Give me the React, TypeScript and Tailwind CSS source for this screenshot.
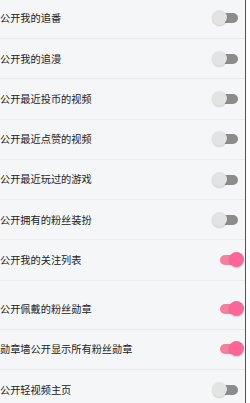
import { useState } from "react";

type Item = { label: string; on: boolean };

const groupA: Item[] = [
  { label: "公开我的追番", on: false },
  { label: "公开我的追漫", on: false },
  { label: "公开最近投币的视频", on: false },
  { label: "公开最近点赞的视频", on: false },
  { label: "公开最近玩过的游戏", on: false },
  { label: "公开拥有的粉丝装扮", on: false },
  { label: "公开我的关注列表", on: true },
];

const groupB: Item[] = [
  { label: "公开佩戴的粉丝勋章", on: true },
  { label: "勋章墙公开显示所有粉丝勋章", on: true },
  { label: "公开轻视频主页", on: false },
];

function Toggle({ on, onClick }: { on: boolean; onClick: () => void }) {
  return (
    <button onClick={onClick} className="relative w-[32px] h-[16px] shrink-0">
      <span
        className={`absolute top-[3px] h-[10px] rounded-full ${
          on ? "left-[8px] w-[19px] bg-[#f2819f]" : "left-[4px] w-[22px] bg-[#8c8c8c]"
        }`}
      />
      <span
        className={`absolute top-0 w-[15px] h-[15px] rounded-full shadow-[0_1px_1.5px_rgba(0,0,0,0.18)] ${
          on ? "left-[17px] bg-[#fb6597]" : "left-0 bg-[#e3e3e3]"
        }`}
      />
    </button>
  );
}

function Row({ item, onToggle }: { item: Item; onToggle: () => void }) {
  return (
    <div className="h-[40.3px] flex items-center justify-between border-b border-[#e9eaec] pr-[1px]">
      <span className="text-[10.2px] text-[#222222] leading-none">{item.label}</span>
      <Toggle on={item.on} onClick={onToggle} />
    </div>
  );
}

export default function App() {
  const [a, setA] = useState(groupA);
  const [b, setB] = useState(groupB);

  const flip = (list: Item[], i: number) => list.map((x, j) => (j === i ? { ...x, on: !x.on } : x));

  return (
    <div
      className="w-[250px] h-[403px] overflow-hidden flex bg-white"
      style={{ fontFamily: '"Noto Sans CJK SC", "Noto Sans", sans-serif' }}
    >
      <div className="w-[246px] h-full bg-[#f5f6f8] border-r border-[#b8262c]">
        <div className="-mt-[1.3px]">
          {a.map((item, i) => (
            <Row key={item.label} item={item} onToggle={() => setA(flip(a, i))} />
          ))}
        </div>
        <div className="mt-[8.7px]">
          {b.map((item, i) => (
            <Row key={item.label} item={item} onToggle={() => setB(flip(b, i))} />
          ))}
        </div>
      </div>
    </div>
  );
}
